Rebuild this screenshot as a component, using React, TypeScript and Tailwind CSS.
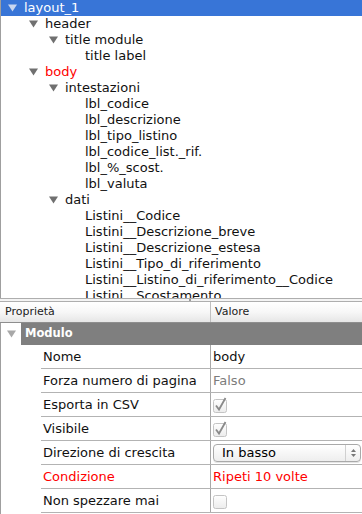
import React from 'react';

type Node = { label: string; level: number; open?: boolean; red?: boolean; selected?: boolean };

const tree: Node[] = [
  { label: 'layout_1', level: 0, open: true, selected: true },
  { label: 'header', level: 1, open: true },
  { label: 'title module', level: 2, open: true },
  { label: 'title label', level: 3 },
  { label: 'body', level: 1, open: true, red: true },
  { label: 'intestazioni', level: 2, open: true },
  { label: 'lbl_codice', level: 3 },
  { label: 'lbl_descrizione', level: 3 },
  { label: 'lbl_tipo_listino', level: 3 },
  { label: 'lbl_codice_list._rif.', level: 3 },
  { label: 'lbl_%_scost.', level: 3 },
  { label: 'lbl_valuta', level: 3 },
  { label: 'dati', level: 2, open: true },
  { label: 'Listini__Codice', level: 3 },
  { label: 'Listini__Descrizione_breve', level: 3 },
  { label: 'Listini__Descrizione_estesa', level: 3 },
  { label: 'Listini__Tipo_di_riferimento', level: 3 },
  { label: 'Listini__Listino_di_riferimento__Codice', level: 3 },
  { label: 'Listini__Scostamento', level: 3 },
];

const pads = ['pl-[8px]', 'pl-[28px]', 'pl-[48px]', 'pl-[68px]'];

function Triangle({ color }: { color: string }) {
  return (
    <svg width="9" height="8" viewBox="0 0 9 8" className="shrink-0">
      <polygon points="0,0.5 9,0.5 4.5,7.5" fill={color} />
    </svg>
  );
}

function Check({ checked }: { checked: boolean }) {
  return (
    <svg width="15" height="16" viewBox="0 0 15 16" className="shrink-0">
      <defs>
        <linearGradient id="cb" x1="0" y1="0" x2="0" y2="1">
          <stop offset="0" stopColor="#ffffff" />
          <stop offset="1" stopColor="#ececec" />
        </linearGradient>
      </defs>
      <rect x="0.5" y="2.5" width="13" height="13" rx="2" fill="url(#cb)" stroke="#c4c4c4" />
      {checked && (
        <path d="M3 8.5 L6 12.5 L12.5 1" fill="none" stroke="#8a8a8a" strokeWidth="1.8" />
      )}
    </svg>
  );
}

const props: { name: string; value: React.ReactNode; red?: boolean }[] = [
  { name: 'Nome', value: <span>body</span> },
  { name: 'Forza numero di pagina', value: <span className="text-[#7c7c7c]">Falso</span> },
  { name: 'Esporta in CSV', value: <Check checked /> },
  { name: 'Visibile', value: <Check checked /> },
  {
    name: 'Direzione di crescita',
    value: (
      <div className="flex h-[18px] w-[148px] items-center rounded-[4px] border border-[#a9a9a9] bg-gradient-to-b from-white to-[#eeeeee] shadow-[0_1px_0_#e4e4e4]">
        <span className="flex-1 pl-[8px] text-[13px] text-black">In basso</span>
        <div className="flex h-full w-[15px] flex-col items-center justify-center gap-[2px] border-l border-[#d0d0d0]">
          <svg width="5" height="3" viewBox="0 0 5 3"><polygon points="0,3 5,3 2.5,0" fill="#777" /></svg>
          <svg width="5" height="3" viewBox="0 0 5 3"><polygon points="0,0 5,0 2.5,3" fill="#777" /></svg>
        </div>
      </div>
    ),
  },
  { name: 'Condizione', value: <span className="text-[#ff0000]">Ripeti 10 volte</span>, red: true },
  { name: 'Non spezzare mai', value: <Check checked={false} /> },
];

export default function App() {
  return (
    <div
      className="flex h-[514px] w-[362px] flex-col overflow-hidden bg-white text-[13px] text-[#111]"
      style={{ fontFamily: '"DejaVu Sans", "Liberation Sans", sans-serif' }}
    >
      {/* Tree */}
      <div className="h-[298px] shrink-0 overflow-hidden border-l border-[#9f9f9f]">
        {tree.map((n, i) => (
          <div
            key={i}
            className={`flex h-4 items-center gap-[7px] whitespace-nowrap ${pads[n.level]} ${
              n.selected ? '-ml-px bg-[#3875d7] text-white' : ''
            }`}
          >
            {n.open ? (
              <Triangle color={n.selected ? '#c9d6f0' : '#707070'} />
            ) : (
              <span className="w-[9px] shrink-0" />
            )}
            <span className={n.red ? 'text-[#ff0000]' : ''}>{n.label}</span>
          </div>
        ))}
      </div>

      {/* Splitter */}
      <div className="relative h-[4px] shrink-0 border-y border-[#aeaeae] bg-[#f4f4f4]">
        <span className="absolute left-[189px] top-0 h-[2px] w-[2px] bg-[#9a9a9a]" />
      </div>

      {/* Property table header */}
      <div className="flex h-[21px] shrink-0 border-b border-[#8e8e8e] bg-gradient-to-b from-white via-[#f7f7f7] to-[#e6e6e6] text-[11px] text-[#1c1c1c]">
        <div className="flex w-[211px] items-center border-r border-[#c0c0c0] pl-[5px]">Proprietà</div>
        <div className="flex items-center pl-[4px]">Valore</div>
      </div>

      {/* Property table body */}
      <div className="flex-1 border-l border-[#9f9f9f]">
        <div className="flex h-[22px] items-center">
          <div className="flex w-[20px] justify-center">
            <Triangle color="#a8a8a8" />
          </div>
          <div className="flex h-full flex-1 items-center bg-[#7f7f7f] pl-[4px] text-[11.5px] font-bold text-white">
            Modulo
          </div>
        </div>
        {props.map((p, i) => (
          <div key={i} className="ml-[40px] flex h-[24px] border-b border-[#b3b3b3]">
            <div
              className={`flex w-[170px] items-center border-r border-[#a8a8a8] pl-[2px] ${
                p.red ? 'text-[#ff0000]' : ''
              }`}
            >
              {p.name}
            </div>
            <div className="flex flex-1 items-center pl-[2px]">{p.value}</div>
          </div>
        ))}
      </div>
    </div>
  );
}
